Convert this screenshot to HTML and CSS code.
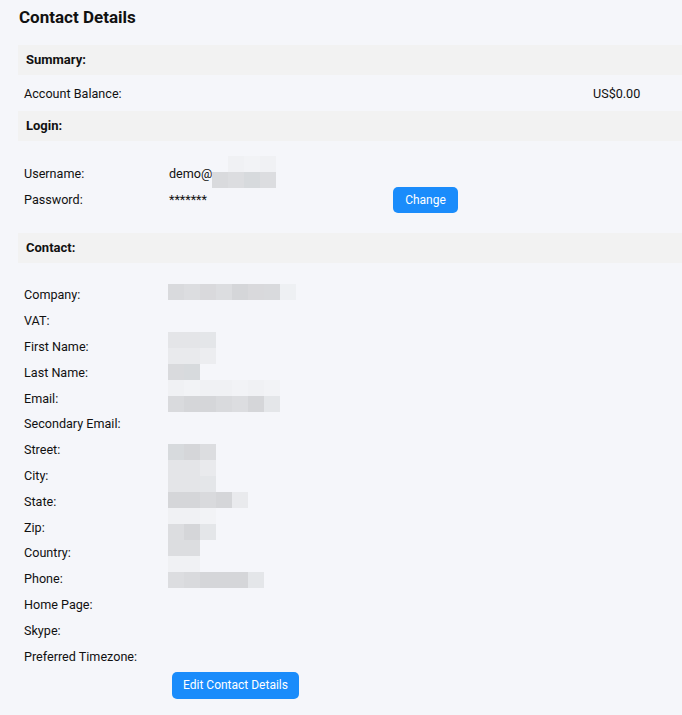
FILE: index.html
```html
<!DOCTYPE html>
<html>
<head>
<meta charset="utf-8">
<link rel="stylesheet" href="styles.css">
</head>
<body>
<div class="page">
  <h1 class="title">Contact Details</h1>

  <div class="bar">Summary:</div>
  <div class="summary">
    <span class="label">Account Balance:</span>
    <span class="amount">US$0.00</span>
  </div>

  <div class="bar">Login:</div>
  <div class="login">
    <div class="row">
      <span class="label">Username:</span>
      <span class="value user">demo@
        <span class="mosaic user-mosaic">
          <span class="mrow"><i class="e"></i><i class="f1"></i><i class="f2"></i><i class="f1"></i></span>
          <span class="mrow"><i class="c1"></i><i class="c2"></i><i class="c3"></i><i class="c2"></i></span>
        </span>
      </span>
    </div>
    <div class="row">
      <span class="label">Password:</span>
      <span class="value">*******</span>
      <button class="btn btn-change">Change</button>
    </div>
  </div>

  <div class="bar">Contact:</div>
  <div class="contact">
    <div class="rows">
      <div class="row"><span class="label">Company:</span><span class="value"></span></div>
      <div class="row"><span class="label">VAT:</span><span class="value"></span></div>
      <div class="row"><span class="label">First Name:</span><span class="value"></span></div>
      <div class="row"><span class="label">Last Name:</span><span class="value"></span></div>
      <div class="row"><span class="label">Email:</span><span class="value"></span></div>
      <div class="row"><span class="label">Secondary Email:</span><span class="value"></span></div>
      <div class="row"><span class="label">Street:</span><span class="value"></span></div>
      <div class="row"><span class="label">City:</span><span class="value"></span></div>
      <div class="row"><span class="label">State:</span><span class="value"></span></div>
      <div class="row"><span class="label">Zip:</span><span class="value"></span></div>
      <div class="row"><span class="label">Country:</span><span class="value"></span></div>
      <div class="row"><span class="label">Phone:</span><span class="value"></span></div>
      <div class="row"><span class="label">Home Page:</span><span class="value"></span></div>
      <div class="row"><span class="label">Skype:</span><span class="value"></span></div>
      <div class="row"><span class="label">Preferred Timezone:</span><span class="value"></span></div>
    </div>
    <div class="mosaic contact-mosaic">
      <span class="mrow"><i class="c1"></i><i class="c2"></i><i class="c4"></i><i class="c2"></i><i class="c5"></i><i class="c4"></i><i class="c1"></i><i class="f3"></i></span>
      <span class="mrow"></span>
      <span class="mrow"></span>
      <span class="mrow"><i class="d1"></i><i class="d1"></i><i class="d2"></i></span>
      <span class="mrow"><i class="d3"></i><i class="d3"></i><i class="d4"></i></span>
      <span class="mrow"><i class="c1"></i><i class="c3"></i></span>
      <span class="mrow"><i class="f1"></i><i class="f2"></i><i class="f1"></i><i class="f1"></i><i class="f2"></i><i class="f1"></i><i class="f2"></i></span>
      <span class="mrow"><i class="c1"></i><i class="c5"></i><i class="c5"></i><i class="c1"></i><i class="c2"></i><i class="c5"></i><i class="d2"></i></span>
      <span class="mrow"></span>
      <span class="mrow"></span>
      <span class="mrow"><i class="c3"></i><i class="c5"></i><i class="c2"></i></span>
      <span class="mrow"><i class="d1"></i><i class="d1"></i><i class="d3"></i></span>
      <span class="mrow"><i class="d1"></i><i class="d1"></i><i class="d2"></i></span>
      <span class="mrow"><i class="c5"></i><i class="c5"></i><i class="c1"></i><i class="c5"></i><i class="d3"></i></span>
      <span class="mrow"><i class="f1"></i><i class="f1"></i><i class="f2"></i></span>
      <span class="mrow"><i class="c2"></i><i class="c5"></i><i class="d2"></i></span>
      <span class="mrow"><i class="c2"></i><i class="c2"></i></span>
      <span class="mrow"><i class="f1"></i><i class="f1"></i></span>
      <span class="mrow"><i class="c2"></i><i class="c1"></i><i class="c5"></i><i class="c5"></i><i class="c5"></i><i class="d2"></i></span>
    </div>
    <div class="actions">
      <button class="btn btn-edit">Edit Contact Details</button>
    </div>
  </div>
</div>
</body>
</html>
```

FILE: styles.css
```css
html, body {
  margin: 0;
  padding: 0;
  background: #f5f6fa;
}
body {
  font-family: Roboto, "Liberation Sans", Arial, sans-serif;
  font-size: 12.6px;
  color: #111;
  overflow: hidden;
}
.page {
  padding: 6px 0 0 18px;
}
.title {
  margin: 0 0 0 1px;
  font-size: 17px;
  font-weight: 700;
  line-height: 22px;
  height: 39px;
  color: #111;
}
.bar {
  background: #f2f2f2;
  height: 30px;
  line-height: 30px;
  padding-left: 8px;
  font-weight: 700;
  font-size: 13px;
}
.summary {
  height: 36px;
  display: flex;
  align-items: center;
  padding-left: 6px;
}
.summary .label {
  width: 569px;
}
.login {
  padding: 19px 0 21px 6px;
}
.row {
  display: flex;
  align-items: center;
  height: 26px;
}
.label {
  width: 145px;
  flex: none;
}
.value {
  width: 224px;
  flex: none;
  position: relative;
}
.contact {
  position: relative;
  padding: 19px 0 0 6px;
}
.contact .row {
  height: 25.8px;
}
.mosaic {
  position: absolute;
  display: flex;
  flex-direction: column;
}
.mrow {
  display: flex;
  height: 16px;
}
.mrow i {
  display: block;
  width: 16px;
  height: 16px;
}
.user-mosaic {
  left: 43px;
  top: -10px;
}
.contact-mosaic {
  left: 150px;
  top: 21px;
}
.e { background: transparent; }
.f1 { background: #f0f1f4; }
.f2 { background: #f2f3f6; }
.f3 { background: #eef0f3; }
.c1 { background: #d9dadd; }
.c2 { background: #dcdde0; }
.c3 { background: #d7dadd; }
.c4 { background: #d9d9dc; }
.c5 { background: #d5d6d9; }
.d1 { background: #e4e5e8; }
.d2 { background: #e4e6e9; }
.d3 { background: #e9eaed; }
.d4 { background: #ecedf0; }
.btn {
  font-family: Roboto, "Liberation Sans", Arial, sans-serif;
  background: #1a8cfb;
  color: #fff;
  border: none;
  border-radius: 5px;
  font-size: 12px;
  padding: 0;
  cursor: pointer;
}
.btn-change {
  width: 65px;
  height: 26px;
  margin-top: 2px;
}
.actions {
  padding: 3px 0 0 148px;
}
.btn-edit {
  width: 127px;
  height: 27px;
}
```
